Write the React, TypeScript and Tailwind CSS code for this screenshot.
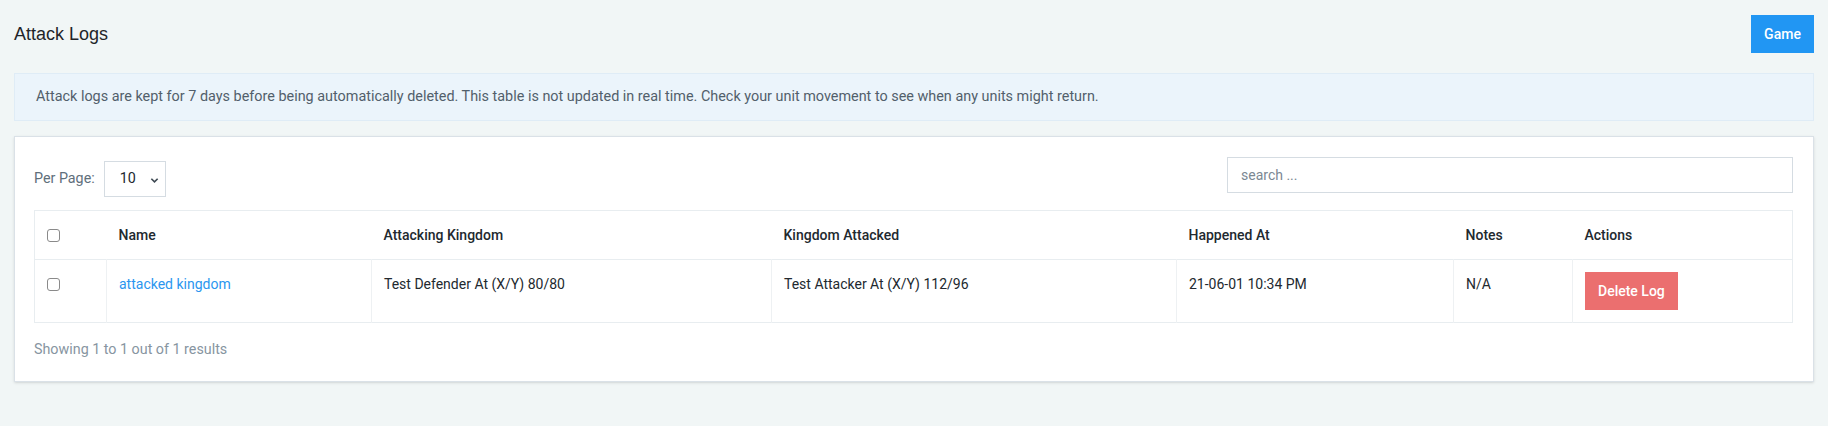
import { useState } from "react";

type Log = {
  id: number;
  name: string;
  attacking: string;
  attacked: string;
  happenedAt: string;
  notes: string;
};

const logs: Log[] = [
  {
    id: 1,
    name: "attacked kingdom",
    attacking: "Test Defender At (X/Y) 80/80",
    attacked: "Test Attacker At (X/Y) 112/96",
    happenedAt: "21-06-01 10:34 PM",
    notes: "N/A",
  },
];

function Checkbox() {
  return (
    <input
      type="checkbox"
      className="block h-[13px] w-[13px] appearance-none rounded-[3px] border border-[#8a8a8a] bg-white"
    />
  );
}

export default function App() {
  const [search, setSearch] = useState("");

  return (
    <div className="min-h-[426px] bg-[#f1f6f6] px-[14px] pt-[15px] pb-10 font-['Roboto',sans-serif] text-[#22292f]">
      {/* Header */}
      <div className="flex items-center justify-between">
        <h1 className="font-['Liberation_Sans',Arial,sans-serif] text-[18px] leading-6 text-[#1f2529]">
          Attack Logs
        </h1>
        <button className="h-[38px] w-[63px] bg-[#2196f3] text-[14px] font-medium text-white">
          Game
        </button>
      </div>

      {/* Info */}
      <div className="mt-5 border border-[#dfecf6] bg-[#ebf4fb] px-[21px] py-[13px] text-[14.4px] leading-5 text-[#525f6b]">
        Attack logs are kept for 7 days before being automatically deleted. This table is not
        updated in real time. Check your unit movement to see when any units might return.
      </div>

      {/* Card */}
      <div className="mt-[15px] border border-[#dae1e7] bg-white pl-[19px] pr-[20px] pt-[20px] pb-[22px] shadow-sm">
        <div className="flex items-start justify-between">
          <div className="mt-1 flex items-center gap-[9px] text-[14.3px] text-[#606f7b]">
            <span>Per Page:</span>
            <div className="relative flex h-[36px] w-[62px] items-center border border-[#d5dce2] pl-[15px] text-[#22292f]">
              10
              <svg
                className="absolute right-[6px] top-[15px] h-[7px] w-[9px]"
                viewBox="0 0 10 7"
                fill="none"
                stroke="#3d4852"
                strokeWidth="1.8"
              >
                <path d="M1.5 1.5l3.5 3.5 3.5-3.5" />
              </svg>
            </div>
          </div>
          <input
            value={search}
            onChange={(e) => setSearch(e.target.value)}
            placeholder="search ..."
            className="h-[36px] w-[566px] border border-[#d5dce2] px-[13px] text-[14px] outline-none placeholder:text-[#7b8893]"
          />
        </div>

        <table className="mt-[13px] w-full table-fixed border-collapse border border-[#e8edf0] text-left text-[14px]">
          <colgroup>
            <col className="w-[72px]" />
            <col className="w-[265px]" />
            <col className="w-[400px]" />
            <col className="w-[405px]" />
            <col className="w-[277px]" />
            <col className="w-[119px]" />
            <col />
          </colgroup>
          <thead>
            <tr className="border-b border-[#e8edf0]">
              <th className="px-[12px] py-3 align-top font-medium">
                <div className="flex h-6 items-center">
                  <Checkbox />
                </div>
              </th>
              <th className="px-[12px] py-3 leading-6 font-medium">Name</th>
              <th className="px-[12px] py-3 leading-6 font-medium">Attacking Kingdom</th>
              <th className="px-[12px] py-3 leading-6 font-medium">Kingdom Attacked</th>
              <th className="px-[12px] py-3 leading-6 font-medium">Happened At</th>
              <th className="px-[12px] py-3 leading-6 font-medium">Notes</th>
              <th className="px-[12px] py-3 leading-6 font-medium">Actions</th>
            </tr>
          </thead>
          <tbody>
            {logs.map((log) => (
              <tr key={log.id} className="border-b border-[#e8edf0]">
                <td className="px-[12px] py-3 align-top">
                  <div className="flex h-6 items-center">
                    <Checkbox />
                  </div>
                </td>
                <td className="border-l border-[#eef1f3] px-[12px] py-3 align-top leading-6">
                  <a href="#" className="text-[#2b96ef]">
                    {log.name}
                  </a>
                </td>
                <td className="border-l border-[#eef1f3] px-[12px] py-3 align-top leading-6">
                  {log.attacking}
                </td>
                <td className="border-l border-[#eef1f3] px-[12px] py-3 align-top leading-6">
                  {log.attacked}
                </td>
                <td className="border-l border-[#eef1f3] px-[12px] py-3 align-top leading-6">
                  {log.happenedAt}
                </td>
                <td className="border-l border-[#eef1f3] px-[12px] py-3 align-top leading-6">
                  {log.notes}
                </td>
                <td className="border-l border-[#eef1f3] px-[12px] py-3 align-top">
                  <button className="h-[38px] bg-[#eb6f6f] px-[13px] text-[14px] font-medium text-white">
                    Delete Log
                  </button>
                </td>
              </tr>
            ))}
          </tbody>
        </table>

        <p className="mt-[16px] text-[14.3px] leading-5 text-[#8795a1]">
          Showing 1 to 1 out of 1 results
        </p>
      </div>
    </div>
  );
}
